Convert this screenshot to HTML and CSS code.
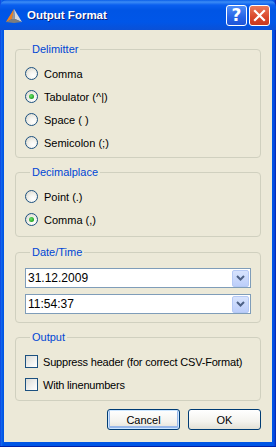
FILE: index.html
```html
<!DOCTYPE html>
<html lang="en">
<head>
  <meta charset="UTF-8">
  <title>Output Format</title>
  <link rel="stylesheet" href="styles.css">
</head>
<body>
  <div class="window">
    <div class="titlebar">
      <svg class="app-icon" width="18" height="16" viewBox="0 0 18 16">
        <polygon points="9,1 1,14 7,11" fill="#f39228"/>
        <polygon points="9,1 7,11 1,14" fill="#e8741a" opacity="0.6"/>
        <polygon points="9,1 17,14 10,11" fill="#d8d8d8"/>
        <polygon points="9,1 7,11 10,11" fill="#9a9a9a"/>
        <polygon points="1,14 7,11 10,11 17,14 9,15" fill="#7d7d7d"/>
      </svg>
      <span class="title">Output Format</span>
      <div class="caption-buttons">
        <span class="cap-btn help">?</span>
        <span class="cap-btn close">
          <svg width="13" height="13" viewBox="0 0 13 13"><path d="M2 2 L11 11 M11 2 L2 11" stroke="#fff" stroke-width="2.2" stroke-linecap="square"/></svg>
        </span>
      </div>
    </div>

    <div class="dialog">
      <fieldset class="group">
        <legend>Delimitter</legend>
        <div class="row"><span class="radio"></span>Comma</div>
        <div class="row"><span class="radio checked"></span>Tabulator (^|)</div>
        <div class="row"><span class="radio"></span>Space ( )</div>
        <div class="row"><span class="radio"></span>Semicolon (;)</div>
      </fieldset>

      <fieldset class="group decimal">
        <legend>Decimalplace</legend>
        <div class="row"><span class="radio"></span>Point (.)</div>
        <div class="row"><span class="radio checked"></span>Comma (,)</div>
      </fieldset>

      <fieldset class="group dates">
        <legend>Date/Time</legend>
        <div class="combo"><span class="combo-text">31.12.2009</span><span class="combo-btn"><svg width="9" height="6" viewBox="0 0 9 6"><path d="M1 1 L4.5 4.5 L8 1" fill="none" stroke="#4d6185" stroke-width="2"/></svg></span></div>
        <div class="combo"><span class="combo-text">11:54:37</span><span class="combo-btn"><svg width="9" height="6" viewBox="0 0 9 6"><path d="M1 1 L4.5 4.5 L8 1" fill="none" stroke="#4d6185" stroke-width="2"/></svg></span></div>
      </fieldset>

      <fieldset class="group output">
        <legend>Output</legend>
        <div class="row"><span class="check"></span>Suppress header (for correct CSV-Format)</div>
        <div class="row"><span class="check"></span>With linenumbers</div>
      </fieldset>

      <div class="buttons">
        <button class="btn default">Cancel</button>
        <button class="btn">OK</button>
      </div>
    </div>
  </div>
</body>
</html>
```

FILE: styles.css
```css
body { margin: 0; background: #fff; font-family: "Liberation Sans", Arial, sans-serif; font-size: 11px; }

.window {
  width: 276px;
  height: 447px;
  box-sizing: border-box;
  padding: 0 4px 4px;
  background: linear-gradient(to right, #0831d9 0, #166aee 1px, #0055e5 3px, #0055e5 calc(100% - 3px), #0a3ed6 calc(100% - 1px), #001ea0 100%);
  display: flex;
  flex-direction: column;
  border-bottom: 1px solid #0020a8;
}

.titlebar {
  height: 30px;
  margin: 0 -4px;
  padding: 0 6px 0 5px;
  display: flex;
  align-items: center;
  background: linear-gradient(#0a5ee8 0, #3c8cf5 2px, #0a5fef 5px, #0055e5 10px, #0056e8 22px, #0a50d6 30px);
  border-radius: 7px 7px 0 0;
}

.app-icon { margin-right: 4px; margin-top: 1px; }

.title {
  color: #fff;
  font-weight: bold;
  font-size: 11.5px;
  text-shadow: 1px 1px 0 #0a1e78;
  flex: 1;
}

.caption-buttons { display: flex; gap: 2px; }

.cap-btn {
  width: 19px;
  height: 19px;
  border: 1px solid #fff;
  border-radius: 3px;
  display: flex;
  align-items: center;
  justify-content: center;
  color: #fff;
}

.help {
  background: linear-gradient(#4f8ef8, #2763e6 60%, #1e55d8);
  font-size: 17px;
  font-weight: bold;
  font-family: "DejaVu Sans", sans-serif;
}

.close { background: linear-gradient(#eb7a5b, #d9472a 60%, #c7391f); }

.dialog {
  flex: 1;
  background: #ece9d8;
  padding: 12px 11px 0;
}

.group {
  margin: 0 0 7px;
  padding: 6px 9px 3px;
  border: 1px solid #d0d0bf;
  border-radius: 4px;
}

.group legend {
  color: #0046d5;
  padding: 0 2px;
  margin-left: 5px;
  line-height: 14px;
}

.row {
  height: 23px;
  display: flex;
  align-items: center;
  color: #000;
  white-space: nowrap;
}

.radio {
  width: 11px;
  height: 11px;
  border: 1px solid #1c5180;
  border-radius: 50%;
  background: radial-gradient(circle at 65% 70%, #fff 0, #f4f3ee 40%, #d6d3c6 100%);
  margin-right: 6px;
  position: relative;
}

.radio.checked::after {
  content: "";
  position: absolute;
  left: 3px;
  top: 3px;
  width: 5px;
  height: 5px;
  border-radius: 50%;
  background: radial-gradient(circle at 40% 40%, #6ee36e, #21a121 70%);
}

.check {
  width: 11px;
  height: 11px;
  border: 1px solid #1c5180;
  background: linear-gradient(135deg, #dcdcd7, #f6f6f4 70%, #fff);
  margin-right: 5px;
}

.decimal { padding-bottom: 5px; margin-bottom: 8px; }

.dates { padding: 9px 9px 8px; }

.combo {
  height: 18px;
  border: 1px solid #7f9db9;
  background: #fff;
  display: flex;
  align-items: center;
  margin-bottom: 6px;
}

.combo:last-child { margin-bottom: 0; }

.combo-text { flex: 1; padding-left: 2px; font-size: 12px; }

.combo-btn {
  width: 15px;
  height: 15px;
  margin-right: 1px;
  border: 1px solid #b5c9f5;
  border-radius: 2px;
  background: linear-gradient(#d7e3fd, #bccefa);
  display: flex;
  align-items: center;
  justify-content: center;
}

.output { padding: 6px 9px 4px; }

.output .row { letter-spacing: -0.2px; }

.buttons {
  display: flex;
  justify-content: flex-end;
  gap: 8px;
  padding-top: 1px;
}

.btn {
  width: 73px;
  height: 21px;
  border: 1px solid #003c74;
  border-radius: 3px;
  background: linear-gradient(#fff, #f4f3ee 60%, #e3e1d6);
  font-family: "Liberation Sans", Arial, sans-serif;
  font-size: 11px;
  color: #000;
  padding: 0;
}

.btn.default {
  box-shadow: inset 0 0 0 1px #cee7ff, inset 0 -1px 0 2px #98b8ea;
}
```
